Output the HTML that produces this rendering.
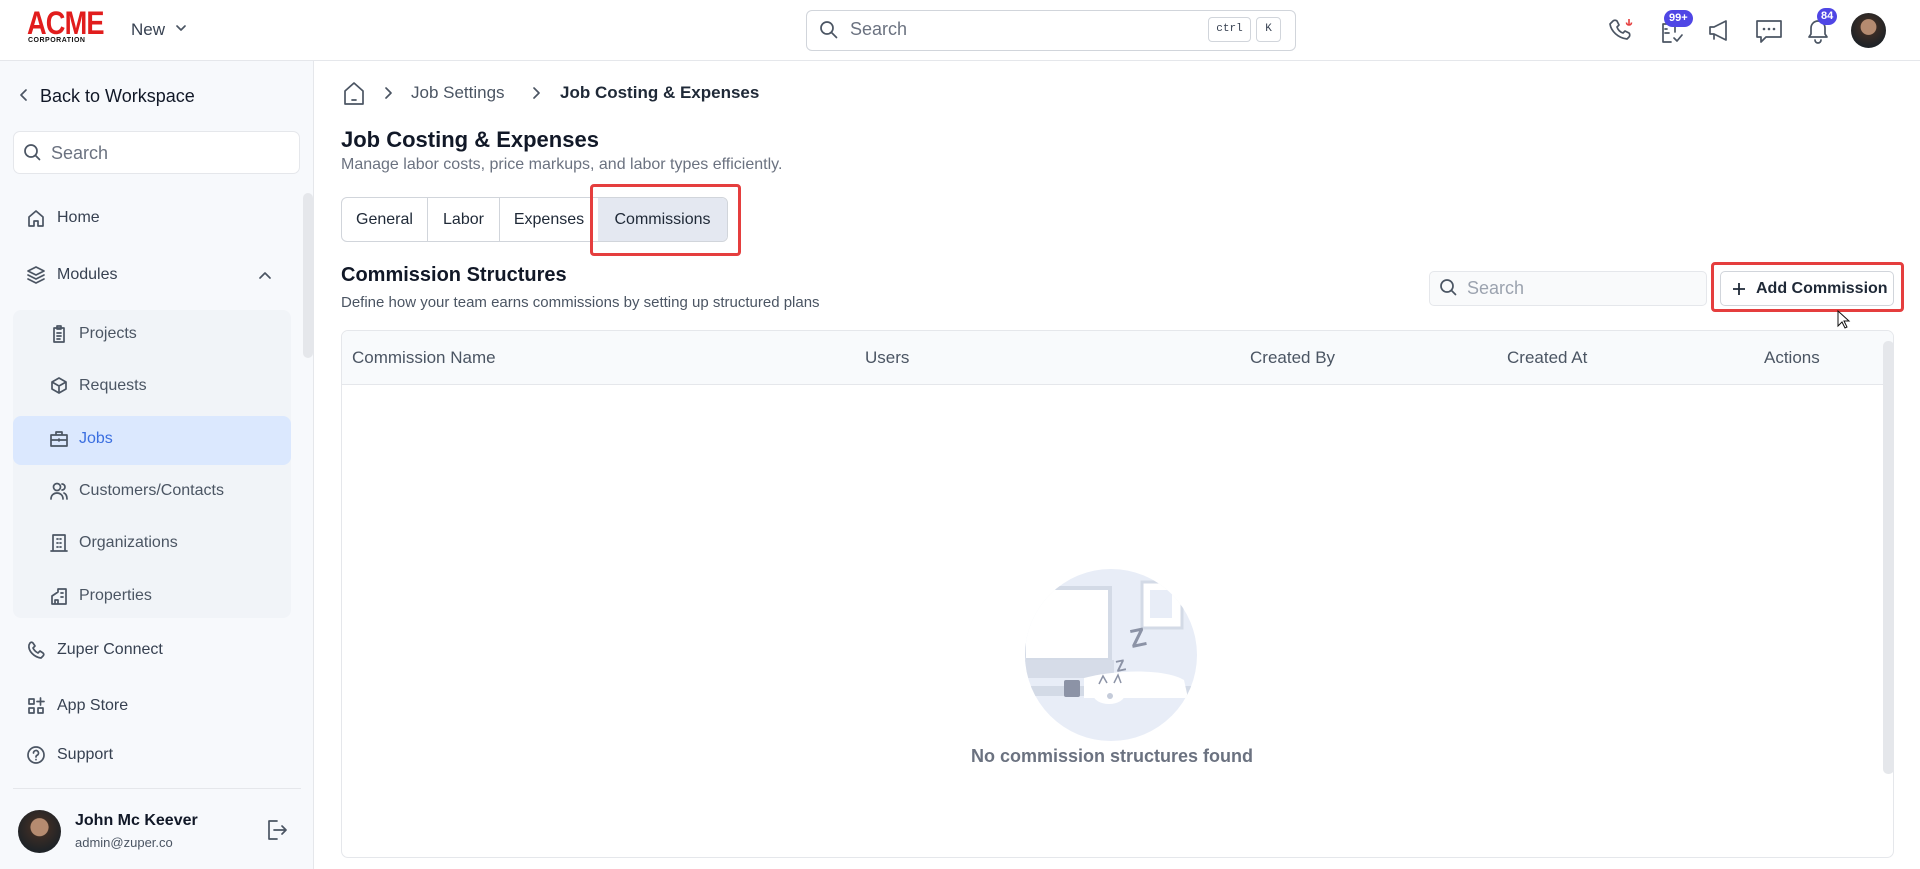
<!DOCTYPE html>
<html><head><meta charset="utf-8"><style>
*{box-sizing:border-box;margin:0;padding:0}
body{width:1920px;height:869px;overflow:hidden;font-family:"Liberation Sans",Arial,sans-serif;background:#fff;color:#1f2937;position:relative}
.abs{position:absolute}
.hdr{left:0;top:0;width:1920px;height:61px;border-bottom:1px solid #e5e7eb;background:#fff}
.side{left:0;top:61px;width:314px;height:808px;background:#f7f9fc;border-right:1px solid #e5e7eb}
.ico{stroke:#4b5563;fill:none;stroke-width:1.7;stroke-linecap:round;stroke-linejoin:round}
.nav{position:absolute;font-size:16px;color:#374151;display:flex;align-items:center}
.sub{position:absolute;font-size:16px;color:#4b5563;display:flex;align-items:center}
.badge{position:absolute;background:#4f46e5;color:#fff;font-size:11px;font-weight:bold;border-radius:9px;padding:2px 5px;line-height:13px}
</style></head><body>
<div class="abs hdr">
  <div class="abs" style="left:27px;top:8px;font-family:'Liberation Sans Narrow','Liberation Sans';font-weight:900;font-size:32px;color:#e11d1d;letter-spacing:-1px;line-height:30px;transform:scaleX(0.85);transform-origin:left">ACME</div>
  <div class="abs" style="left:28px;top:37px;font-size:7px;font-weight:bold;letter-spacing:0.5px;color:#111">CORPORATION</div>
  <div class="abs" style="left:131px;top:20px;font-size:17px;color:#374151">New</div>
  <svg class="abs" style="left:175px;top:22px" width="12" height="12"><path d="M2 4l4 4 4-4" class="ico" stroke-width="1.5"/></svg>
  <div class="abs" style="left:806px;top:10px;width:490px;height:41px;border:1px solid #d1d5db;border-radius:6px"></div>
  <svg class="abs" style="left:818px;top:19px" width="22" height="22"><circle cx="9" cy="9" r="6" class="ico" stroke="#6b7280"/><path d="M13.5 13.5l5 5" class="ico" stroke="#6b7280"/></svg>
  <div class="abs" style="left:850px;top:19px;font-size:18px;color:#6b7280">Search</div>
  <div class="abs" style="left:1208px;top:17px;width:43px;height:25px;border:1px solid #d1d5db;border-radius:4px;font-family:'Liberation Mono';font-size:11px;color:#374151;text-align:center;line-height:23px">ctrl</div>
  <div class="abs" style="left:1256px;top:17px;width:25px;height:25px;border:1px solid #d1d5db;border-radius:4px;font-family:'Liberation Mono';font-size:11px;color:#374151;text-align:center;line-height:23px">K</div>
  <svg class="abs" style="left:1607px;top:16px" width="30" height="30"><path d="M6 5c1-1 3-1 4 0l2 4-2 2c1 3 3 5 6 6l2-2 4 2c1 1 1 3 0 4l-2 2C11 22 4 15 3 8z" class="ico" stroke="#4b5563" stroke-width="2"/><path d="M22 3v6M19.5 6.5a2.5 2.5 0 0 0 5 0" stroke="#e53e3e" stroke-width="1.6" fill="none"/></svg>
  <svg class="abs" style="left:1659px;top:18px" width="28" height="28"><path d="M4 6h12v8M4 6v18h8M6 11h2M6 15h4M15 20l3 3 5-6" class="ico" stroke-width="2"/></svg>
  <div class="badge" style="left:1664px;top:10px">99+</div>
  <svg class="abs" style="left:1705px;top:16px" width="30" height="30"><path d="M5 11v7h4l12 6V5L9 11z M9 18v5" class="ico" stroke-width="2"/></svg>
  <svg class="abs" style="left:1754px;top:17px" width="30" height="28"><path d="M3 4h24v16H12l-5 5v-5H3z" class="ico" stroke-width="2"/><circle cx="10" cy="12" r="1.3" fill="#4b5563"/><circle cx="15" cy="12" r="1.3" fill="#4b5563"/><circle cx="20" cy="12" r="1.3" fill="#4b5563"/></svg>
  <svg class="abs" style="left:1804px;top:16px" width="28" height="30"><path d="M5 21h18l-2-3v-6a7 7 0 0 0-14 0v6zM11 24a3 3 0 0 0 6 0" class="ico" stroke-width="2"/></svg>
  <div class="badge" style="left:1817px;top:8px;padding:2px 4px">84</div>
  <div class="abs" style="left:1851px;top:13px;width:35px;height:35px;border-radius:50%;background:radial-gradient(circle at 50% 40%,#b58b70 0 28%,#3a2c25 30%,#1f2327 70%)"></div>
</div>
<div class="abs side">
  <svg class="abs" style="left:18px;top:27px" width="12" height="14"><path d="M8 2L3 7l5 5" class="ico" stroke="#111" stroke-width="1.8"/></svg>
  <div class="abs" style="left:40px;top:25px;font-size:18px;color:#111827">Back to Workspace</div>
  <div class="abs" style="left:13px;top:70px;width:287px;height:43px;background:#fff;border:1px solid #e5e7eb;border-radius:7px"></div>
  <svg class="abs" style="left:23px;top:82px" width="20" height="20"><circle cx="8" cy="8" r="6" class="ico" stroke="#6b7280"/><path d="M12.5 12.5l4 4" class="ico" stroke="#6b7280"/></svg>
  <div class="abs" style="left:51px;top:82px;font-size:18px;color:#6b7280">Search</div>
  <div class="abs" style="left:303px;top:132px;width:10px;height:165px;background:#e5e7eb;border-radius:5px"></div>
  <div class="nav" style="left:26px;top:147px"><svg width="20" height="20" style="margin-right:11px"><path d="M3 9l7-6 7 6v9h-5v-5H8v5H3z" class="ico"/></svg>Home</div>
  <div class="nav" style="left:26px;top:204px"><svg width="20" height="20" style="margin-right:11px"><path d="M10 2l8 4-8 4-8-4zM2 10l8 4 8-4M2 14l8 4 8-4" class="ico"/></svg>Modules</div>
  <svg class="abs" style="left:258px;top:209px" width="14" height="10"><path d="M2 8l5-5 5 5" class="ico"/></svg>
  <div class="abs" style="left:13px;top:249px;width:278px;height:308px;background:#f1f4f8;border-radius:8px"></div>
  <div class="abs" style="left:13px;top:355px;width:278px;height:49px;background:#dbe8fe;border-radius:8px"></div>
  <div class="sub" style="left:49px;top:263px"><svg width="20" height="20" style="margin-right:10px"><path d="M5 4h10v14H5zM8 2h4v3H8zM8 9h4M8 12h4M8 15h3" class="ico"/></svg>Projects</div>
  <div class="sub" style="left:49px;top:315px"><svg width="20" height="20" style="margin-right:10px"><path d="M10 2l7 4v7l-7 4-7-4V6zM3 6l7 4 7-4M10 10v7" class="ico"/></svg>Requests</div>
  <div class="sub" style="left:49px;top:368px;color:#3b6fe0"><svg width="20" height="20" style="margin-right:10px"><path d="M2 6h16v11H2zM7 6V3h6v3M2 11h16M10 10v2" class="ico" stroke="#3b6fe0"/></svg>Jobs</div>
  <div class="sub" style="left:49px;top:420px"><svg width="20" height="20" style="margin-right:10px"><circle cx="8" cy="6" r="3.5" class="ico"/><path d="M2 18c0-4 3-6 6-6s6 2 6 6M13 3a3 3 0 0 1 0 6M15 12c2 1 3 3 3 6" class="ico"/></svg>Customers/Contacts</div>
  <div class="sub" style="left:49px;top:472px"><svg width="20" height="20" style="margin-right:10px"><path d="M4 2h12v16H4zM2 18h16M8 6h1M11 6h1M8 10h1M11 10h1M8 14h1M11 14h1" class="ico"/></svg>Organizations</div>
  <div class="sub" style="left:49px;top:525px"><svg width="20" height="20" style="margin-right:10px"><path d="M9 3h8v15H3v-8l6-4zM6 18v-4h3v4M12 7h2M12 11h2" class="ico"/></svg>Properties</div>
  <div class="nav" style="left:26px;top:579px"><svg width="20" height="20" style="margin-right:11px"><path d="M4 3c1-1 2-1 3 0l2 3-2 2c1 2 3 4 5 5l2-2 3 2c1 1 1 2 0 3l-2 2C8 17 2 11 3 5z" class="ico"/></svg>Zuper Connect</div>
  <div class="nav" style="left:26px;top:635px"><svg width="20" height="20" style="margin-right:11px"><path d="M3 3h5v5H3zM3 12h5v5H3zM12 12h5v5h-5zM14.5 2v7M11 5.5h7" class="ico"/></svg>App Store</div>
  <div class="nav" style="left:26px;top:684px"><svg width="20" height="20" style="margin-right:11px"><circle cx="10" cy="10" r="8" class="ico"/><path d="M7.5 8a2.5 2.5 0 1 1 3.5 2.3c-.7.3-1 1-1 1.7M10 14.5v.2" class="ico"/></svg>Support</div>
  <div class="abs" style="left:13px;top:727px;width:288px;height:1px;background:#e5e7eb"></div>
  <div class="abs" style="left:18px;top:749px;width:43px;height:43px;border-radius:50%;background:radial-gradient(circle at 50% 40%,#b58b70 0 26%,#3a2c25 28%,#1f2327 70%)"></div>
  <div class="abs" style="left:75px;top:751px;font-size:16px;font-weight:bold;color:#111827">John Mc Keever</div>
  <div class="abs" style="left:75px;top:774px;font-size:13px;color:#4b5563">admin@zuper.co</div>
  <svg class="abs" style="left:265px;top:757px" width="24" height="24"><path d="M12 3H4v18h8M9 12h12M17 8l4 4-4 4" class="ico" stroke="#6b7280"/></svg>
</div>
<svg class="abs" style="left:342px;top:81px" width="24" height="26"><path d="M3 10l9-8 9 8v13H3zM10 19h4" class="ico" stroke-width="2"/></svg>
<svg class="abs" style="left:383px;top:86px" width="12" height="14"><path d="M3 2l5 5-5 5" class="ico" stroke="#9ca3af"/></svg>
<div class="abs" style="left:411px;top:83px;font-size:17px;color:#4b5563">Job Settings</div>
<svg class="abs" style="left:531px;top:86px" width="12" height="14"><path d="M3 2l5 5-5 5" class="ico" stroke="#9ca3af"/></svg>
<div class="abs" style="left:560px;top:83px;font-size:17px;font-weight:bold;color:#1f2937">Job Costing &amp; Expenses</div>
<div class="abs" style="left:341px;top:127px;font-size:22px;font-weight:bold;color:#111827">Job Costing &amp; Expenses</div>
<div class="abs" style="left:341px;top:156px;font-size:16px;color:#6b7280">Manage labor costs, price markups, and labor types efficiently.</div>
<div class="abs" style="left:341px;top:197px;width:387px;height:45px;border:1px solid #d1d5db;border-radius:6px;display:flex;font-size:16px;color:#1f2937">
  <div style="width:86px;border-right:1px solid #d1d5db;text-align:center;line-height:43px">General</div>
  <div style="width:72px;border-right:1px solid #d1d5db;text-align:center;line-height:43px">Labor</div>
  <div style="width:98px;text-align:center;line-height:43px">Expenses</div>
  <div style="flex:1;background:#e4e8f1;text-align:center;line-height:43px;border-radius:0 5px 5px 0">Commissions</div>
</div>
<div class="abs" style="left:590px;top:184px;width:151px;height:72px;border:3px solid #e53e3e;border-radius:4px"></div>
<div class="abs" style="left:341px;top:264px;font-size:20px;font-weight:bold;color:#111827">Commission Structures</div>
<div class="abs" style="left:341px;top:294px;font-size:15px;color:#4b5563">Define how your team earns commissions by setting up structured plans</div>
<div class="abs" style="left:1429px;top:271px;width:278px;height:35px;border:1px solid #e5e7eb;border-radius:5px;background:#f9fafb"></div>
<svg class="abs" style="left:1439px;top:278px" width="20" height="20"><circle cx="8" cy="8" r="6" class="ico" stroke="#9ca3af"/><path d="M12.5 12.5l4 4" class="ico" stroke="#9ca3af"/></svg>
<div class="abs" style="left:1467px;top:278px;font-size:18px;color:#9ca3af">Search</div>
<div class="abs" style="left:1720px;top:271px;width:174px;height:35px;border:1px solid #d1d5db;border-radius:5px;background:#fff"></div>
<svg class="abs" style="left:1731px;top:281px" width="16" height="16"><path d="M8 2v12M2 8h12" stroke="#1f2937" stroke-width="1.8"/></svg>
<div class="abs" style="left:1756px;top:280px;font-size:16px;font-weight:bold;color:#1f2937">Add Commission</div>
<div class="abs" style="left:1711px;top:262px;width:193px;height:50px;border:3px solid #e53e3e;border-radius:4px"></div>
<svg class="abs" style="left:1836px;top:310px" width="16" height="20"><path d="M2 1v15l4-4 3 6 2-1-3-6h5z" fill="#fff" stroke="#111" stroke-width="1"/></svg>
<div class="abs" style="left:341px;top:330px;width:1553px;height:528px;border:1px solid #e5e7eb;border-radius:7px;overflow:hidden">
  <div style="height:54px;background:#f8fafc;border-bottom:1px solid #e5e7eb;position:relative;font-size:17px;color:#4b5563">
    <span class="abs" style="left:10px;top:17px">Commission Name</span>
    <span class="abs" style="left:523px;top:17px">Users</span>
    <span class="abs" style="left:908px;top:17px">Created By</span>
    <span class="abs" style="left:1165px;top:17px">Created At</span>
    <span class="abs" style="left:1422px;top:17px">Actions</span>
  </div>
  <div class="abs" style="left:1541px;top:10px;width:11px;height:433px;background:#e5e7eb;border-radius:5px"></div>
</div>
<svg class="abs" style="left:1024px;top:568px" width="174" height="174" viewBox="0 0 174 174">
  <defs><clipPath id="c"><circle cx="87" cy="87" r="86"/></clipPath></defs>
  <circle cx="87" cy="87" r="86" fill="#e8edf7"/>
  <g clip-path="url(#c)">
    <rect x="0" y="20" width="86" height="72" fill="#fff" stroke="#d3dae6" stroke-width="4"/>
    <rect x="0" y="92" width="90" height="18" fill="#d6dce8"/>
    <rect x="118" y="14" width="40" height="46" fill="#fff" stroke="#d3dae6" stroke-width="3"/>
    <rect x="126" y="22" width="22" height="28" fill="#e8edf7"/>
    <rect x="0" y="118" width="174" height="10" fill="#d3dae6"/>
    <rect x="40" y="112" width="16" height="17" fill="#8c93a6" rx="2"/>
    <path d="M60 110c30-8 80-10 100 2l4 18H60z" fill="#fff"/>
    <ellipse cx="85" cy="126" rx="16" ry="10" fill="#fff"/>
    <circle cx="86" cy="128" r="3" fill="#c5ccda"/>
    <path d="M75 116l4-8 4 7M90 115l4-8 3 8" stroke="#8c93a6" stroke-width="1.5" fill="#fff"/>
  </g>
  <text x="108" y="80" font-size="26" font-weight="bold" fill="#8c93a6" font-family="Liberation Sans" transform="rotate(-12 108 80)">Z</text>
  <text x="93" y="104" font-size="16" font-weight="bold" fill="#8c93a6" font-family="Liberation Sans" transform="rotate(-12 93 104)">Z</text>
</svg>
<div class="abs" style="left:900px;top:746px;width:424px;text-align:center;font-size:18px;font-weight:bold;color:#6b7280">No commission structures found</div>
</body></html>
